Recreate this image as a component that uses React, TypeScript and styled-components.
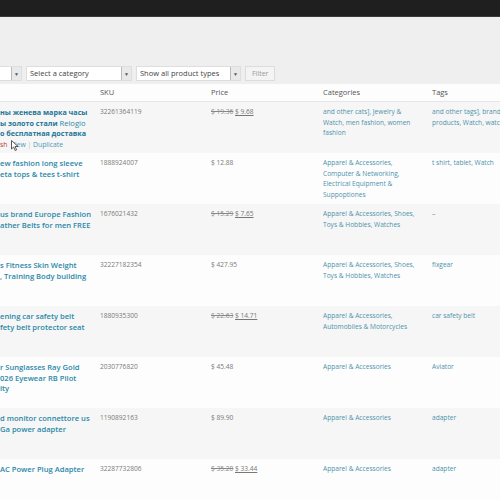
import React from "react";
import styled, { createGlobalStyle } from "styled-components";

const Global = createGlobalStyle`
  html, body { margin: 0; padding: 0; overflow: hidden; background: #efefef; }
  body { font-family: "Open Sans", "Noto Sans", sans-serif; width: 500px; height: 500px; }
  #root { width: 500px; height: 500px; overflow: hidden; }
`;

const Page = styled.div`
  width: 500px;
  height: 500px;
  display: flex;
  flex-direction: column;
  background: #efefef;
  overflow: hidden;
`;

const TopBar = styled.div`
  height: 16px;
  flex: none;
  background: #1f1f1f;
  border-bottom: 1px solid #3a3a3a;
`;

const Filters = styled.div`
  display: flex;
  align-items: center;
  gap: 4px;
  height: 15px;
  margin-top: 49px;
  margin-left: -82px;
`;

const Select = styled.div<{ $w: number }>`
  width: ${(p) => p.$w}px;
  height: 15px;
  box-sizing: border-box;
  display: flex;
  align-items: stretch;
  background: #fff;
  border: 1px solid #dedede;
  font-size: 7.5px;
  color: #444;
`;

const SelectText = styled.span`
  flex: 1;
  padding-left: 3px;
  line-height: 13px;
  white-space: nowrap;
  overflow: hidden;
`;

const Arrow = styled.span`
  width: 9px;
  flex: none;
  border-left: 1px solid #bbb;
  background: #e9e9e9;
  display: flex;
  align-items: center;
  justify-content: center;
  font-size: 5px;
  color: #555;
`;

const FilterButton = styled.div`
  height: 15px;
  box-sizing: border-box;
  padding: 0 6px;
  border: 1px solid #dcdcdc;
  background: #f4f4f4;
  font-size: 7px;
  line-height: 13px;
  color: #999;
`;

const Table = styled.div`
  margin-top: 3px;
  width: 540px;
  display: grid;
  grid-template-columns: 100px 111px 112px 109px 108px;
  grid-template-rows: 18px;
  grid-auto-rows: 51px;
`;

const HeadCell = styled.div`
  background: #fdfdfd;
  border-bottom: 1px solid #e6e6e6;
  font-size: 7.5px;
  line-height: 17px;
  color: #555;
  white-space: nowrap;
`;

const Cell = styled.div<{ $odd: boolean; $pad?: number }>`
  background: ${(p) => (p.$odd ? "#f6f6f6" : "#fdfdfd")};
  padding: 5px ${(p) => p.$pad ?? 0}px 0 0;
  box-sizing: border-box;
  font-size: 6.6px;
  line-height: 10.5px;
  color: #7a7a7a;
  overflow: hidden;
  position: relative;
`;

const NameLine = styled.div`
  white-space: nowrap;
  font-size: 7.6px;
  line-height: 10.5px;
  font-weight: 600;
  color: #2b88a8;
`;

const Bold = styled.span`
  font-weight: 700;
  font-size: 7.2px;
  color: #217596;
`;

const Light = styled.span`
  font-weight: 400;
`;

const Actions = styled.div`
  margin-top: 1px;
  font-size: 6.8px;
  line-height: 10px;
  color: #4b9ab4;
  white-space: nowrap;
`;

const Trash = styled.span`
  color: #b43a3a;
`;

const Sep = styled.span`
  color: #bbb;
`;

const Link = styled.div`
  color: #4d93ab;
`;

const Old = styled.span`
  text-decoration: line-through;
  color: #888;
`;

const New = styled.span`
  text-decoration: underline;
  color: #777;
`;

const Cursor = styled.svg`
  position: absolute;
  left: 11px;
  top: 38px;
`;

type Row = {
  name: React.ReactNode;
  sku: string;
  old?: string;
  price: string;
  cats: string;
  tags: string;
};

const rows: Row[] = [
  {
    name: (
      <>
        <NameLine><Bold>ны женева марка часы</Bold></NameLine>
        <NameLine><Bold>ы золото стали </Bold><Light>Relogio</Light></NameLine>
        <NameLine><Bold>о бесплатная доставка</Bold></NameLine>
        <Actions>
          <Trash>sh</Trash> &nbsp;View <Sep>|</Sep> Duplicate
        </Actions>
      </>
    ),
    sku: "32261364119",
    old: "$ 19.36",
    price: "$ 9.68",
    cats: "and other cats], Jewelry & Watch, men fashion, women fashion",
    tags: "and other tags], brand products, Watch, watch",
  },
  {
    name: (
      <>
        <NameLine>ew fashion long sleeve</NameLine>
        <NameLine>eta tops &amp; tees t-shirt</NameLine>
      </>
    ),
    sku: "1888924007",
    price: "$ 12.88",
    cats: "Apparel & Accessories, Computer & Networking, Electrical Equipment & Suppoptiones",
    tags: "t shirt, tablet, Watch",
  },
  {
    name: (
      <>
        <NameLine>us brand Europe Fashion</NameLine>
        <NameLine>ather Belts for men FREE</NameLine>
      </>
    ),
    sku: "1676021432",
    old: "$ 15.29",
    price: "$ 7.65",
    cats: "Apparel & Accessories, Shoes, Toys & Hobbies, Watches",
    tags: "–",
  },
  {
    name: (
      <>
        <NameLine>s Fitness Skin Weight</NameLine>
        <NameLine>, Training Body building</NameLine>
      </>
    ),
    sku: "32227182354",
    price: "$ 427.95",
    cats: "Apparel & Accessories, Shoes, Toys & Hobbies, Watches",
    tags: "fixgear",
  },
  {
    name: (
      <>
        <NameLine>ening car safety belt</NameLine>
        <NameLine>fety belt protector seat</NameLine>
      </>
    ),
    sku: "1880935300",
    old: "$ 22.63",
    price: "$ 14.71",
    cats: "Apparel & Accessories, Automobiles & Motorcycles",
    tags: "car safety belt",
  },
  {
    name: (
      <>
        <NameLine>r Sunglasses Ray Gold</NameLine>
        <NameLine>026 Eyewear RB Pilot</NameLine>
        <NameLine>ity</NameLine>
      </>
    ),
    sku: "2030776820",
    price: "$ 45.48",
    cats: "Apparel & Accessories",
    tags: "Aviator",
  },
  {
    name: (
      <>
        <NameLine>d monitor connettore us</NameLine>
        <NameLine>Ga power adapter</NameLine>
      </>
    ),
    sku: "1190892163",
    price: "$ 89.90",
    cats: "Apparel & Accessories",
    tags: "adapter",
  },
  {
    name: <NameLine>AC Power Plug Adapter</NameLine>,
    sku: "32287732806",
    old: "$ 35.20",
    price: "$ 33.44",
    cats: "Apparel & Accessories",
    tags: "adapter",
  },
];

export default function App() {
  return (
    <Page>
      <Global />
      <TopBar />
      <Filters>
        <Select $w={104}>
          <SelectText>Show all stock</SelectText>
          <Arrow>▼</Arrow>
        </Select>
        <Select $w={106}>
          <SelectText>Select a category</SelectText>
          <Arrow>▼</Arrow>
        </Select>
        <Select $w={105}>
          <SelectText>Show all product types</SelectText>
          <Arrow>▼</Arrow>
        </Select>
        <FilterButton>Filter</FilterButton>
      </Filters>
      <Table>
        <HeadCell />
        <HeadCell>SKU</HeadCell>
        <HeadCell>Price</HeadCell>
        <HeadCell>Categories</HeadCell>
        <HeadCell>Tags</HeadCell>
        {rows.map((r, i) => {
          const odd = i % 2 === 0;
          return (
            <React.Fragment key={r.sku}>
              <Cell $odd={odd}>
                {r.name}
                {i === 0 && (
                  <Cursor width="8" height="11" viewBox="0 0 8 11">
                    <path d="M0.5 0.5 L0.5 9 L2.6 7 L4.2 10.5 L5.6 9.9 L4.1 6.5 L7 6.5 Z" fill="#fff" stroke="#333" strokeWidth="0.8" />
                  </Cursor>
                )}
              </Cell>
              <Cell $odd={odd}>{r.sku}</Cell>
              <Cell $odd={odd}>
                {r.old && (
                  <>
                    <Old>{r.old}</Old>{" "}
                  </>
                )}
                {r.old ? <New>{r.price}</New> : r.price}
              </Cell>
              <Cell $odd={odd} $pad={14}>
                <Link>{r.cats}</Link>
              </Cell>
              <Cell $odd={odd} $pad={26}>
                <Link>{r.tags}</Link>
              </Cell>
            </React.Fragment>
          );
        })}
      </Table>
    </Page>
  );
}
